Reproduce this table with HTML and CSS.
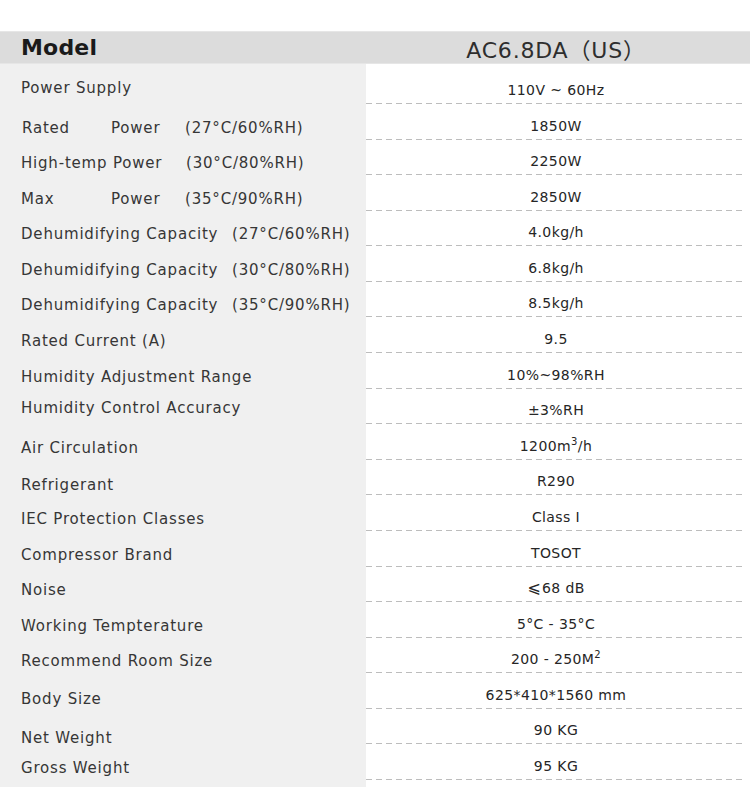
FILE: index.html
```html
<!DOCTYPE html>
<html lang="en">
<head>
<meta charset="utf-8">
<title>AC6.8DA (US) Specifications</title>
<link rel="stylesheet" href="styles.css">
</head>
<body>
<div class="spec">
  <div class="head">
    <div class="head-label">Model</div>
    <div class="head-value">AC6.8DA（US）</div>
  </div>
  <div class="rows">
    <div class="row first"><div class="label up">Power Supply</div><div class="val"><span>110V ~ 60Hz</span></div></div>
    <div class="row"><div class="label"><span class="c1 x1">Rated</span><span class="c2">Power</span><span>(27°C/60%RH)</span></div><div class="val"><span>1850W</span></div></div>
    <div class="row"><div class="label"><span class="c12">High-temp Power</span><span>(30°C/80%RH)</span></div><div class="val"><span>2250W</span></div></div>
    <div class="row"><div class="label"><span class="c1">Max</span><span class="c2">Power</span><span>(35°C/90%RH)</span></div><div class="val"><span>2850W</span></div></div>
    <div class="row"><div class="label"><span class="dh">Dehumidifying Capacity</span><span>(27°C/60%RH)</span></div><div class="val"><span>4.0kg/h</span></div></div>
    <div class="row"><div class="label"><span class="dh">Dehumidifying Capacity</span><span>(30°C/80%RH)</span></div><div class="val"><span>6.8kg/h</span></div></div>
    <div class="row"><div class="label"><span class="dh">Dehumidifying Capacity</span><span>(35°C/90%RH)</span></div><div class="val"><span>8.5kg/h</span></div></div>
    <div class="row"><div class="label">Rated Current (A)</div><div class="val"><span>9.5</span></div></div>
    <div class="row"><div class="label">Humidity Adjustment Range</div><div class="val"><span>10%~98%RH</span></div></div>
    <div class="row"><div class="label up">Humidity Control Accuracy</div><div class="val"><span>±3%RH</span></div></div>
    <div class="row"><div class="label">Air Circulation</div><div class="val"><span>1200m<sup>3</sup>/h</span></div></div>
    <div class="row"><div class="label down">Refrigerant</div><div class="val"><span>R290</span></div></div>
    <div class="row"><div class="label">IEC Protection Classes</div><div class="val"><span>Class I</span></div></div>
    <div class="row"><div class="label">Compressor Brand</div><div class="val"><span>TOSOT</span></div></div>
    <div class="row"><div class="label">Noise</div><div class="val"><span><span class="le">⩽</span>68 dB</span></div></div>
    <div class="row"><div class="label">Working Tempterature</div><div class="val"><span>5°C - 35°C</span></div></div>
    <div class="row"><div class="label">Recommend Room Size</div><div class="val"><span>200 - 250M<sup>2</sup></span></div></div>
    <div class="row"><div class="label down">Body Size</div><div class="val"><span>625*410*1560 mm</span></div></div>
    <div class="row"><div class="label down2">Net Weight</div><div class="val"><span>90 KG</span></div></div>
    <div class="row"><div class="label">Gross Weight</div><div class="val"><span>95 KG</span></div></div>
  </div>
</div>
</body>
</html>
```
FILE: styles.css
```css
html, body {
  margin: 0;
  padding: 0;
  background: #ffffff;
}
body {
  width: 750px;
  font-family: "DejaVu Sans", "Noto Sans CJK SC", sans-serif;
  color: #333333;
}
.spec {
  padding-top: 31px;
}
.head {
  display: flex;
  height: 31px;
  background: #dcdcdc;
  border-top: 1px solid #e6e6e6;
  border-bottom: 1px solid #e6e6e6;
  align-items: center;
}
.head-label {
  width: 366px;
  box-sizing: border-box;
  padding-left: 21px;
  font-weight: bold;
  font-size: 22px;
  color: #1a1a1a;
  letter-spacing: 0.2px;
}
.head-value {
  width: 380px;
  text-align: center;
  font-size: 22px;
  color: #2e2e2e;
  letter-spacing: 0.8px;
}
.rows {
  background: linear-gradient(to right, #f0f0f0 366px, #ffffff 366px);
  padding-bottom: 10px;
}
.row {
  display: flex;
  height: 35.58px;
}
.row.first {
  height: 40px;
}
.label {
  width: 366px;
  box-sizing: border-box;
  padding-left: 21px;
  padding-bottom: 3px;
  display: flex;
  align-items: flex-end;
  font-size: 15px;
  line-height: 18px;
  letter-spacing: 0.8px;
  color: #363636;
  white-space: nowrap;
}
.label.up { padding-bottom: 7px; }
.label.down { padding-bottom: 1px; }
.label.down2 { padding-bottom: 0; margin-bottom: -3px; }
.c1 { width: 90px; display: inline-block; }
.x1 { padding-left: 1px; width: 89px; }
.c2 { width: 74px; display: inline-block; }
.c12 { width: 165px; display: inline-block; }
.dh { width: 211px; display: inline-block; }
.val {
  width: 380px;
  display: flex;
  flex-direction: column;
  justify-content: flex-end;
  align-items: center;
  font-size: 14px;
  line-height: 18px;
  letter-spacing: 0.4px;
  color: #262626;
  white-space: nowrap;
}
.val > span {
  padding-bottom: 4px;
}
.le {
  font-size: 16px;
  margin-right: 1px;
}
.val::after {
  content: "";
  display: block;
  align-self: stretch;
  height: 1px;
  background: repeating-linear-gradient(to right, #bdbdbd 0 6px, transparent 6px 10px);
}
sup {
  font-size: 10px;
  line-height: 0;
  vertical-align: 6px;
}
```
